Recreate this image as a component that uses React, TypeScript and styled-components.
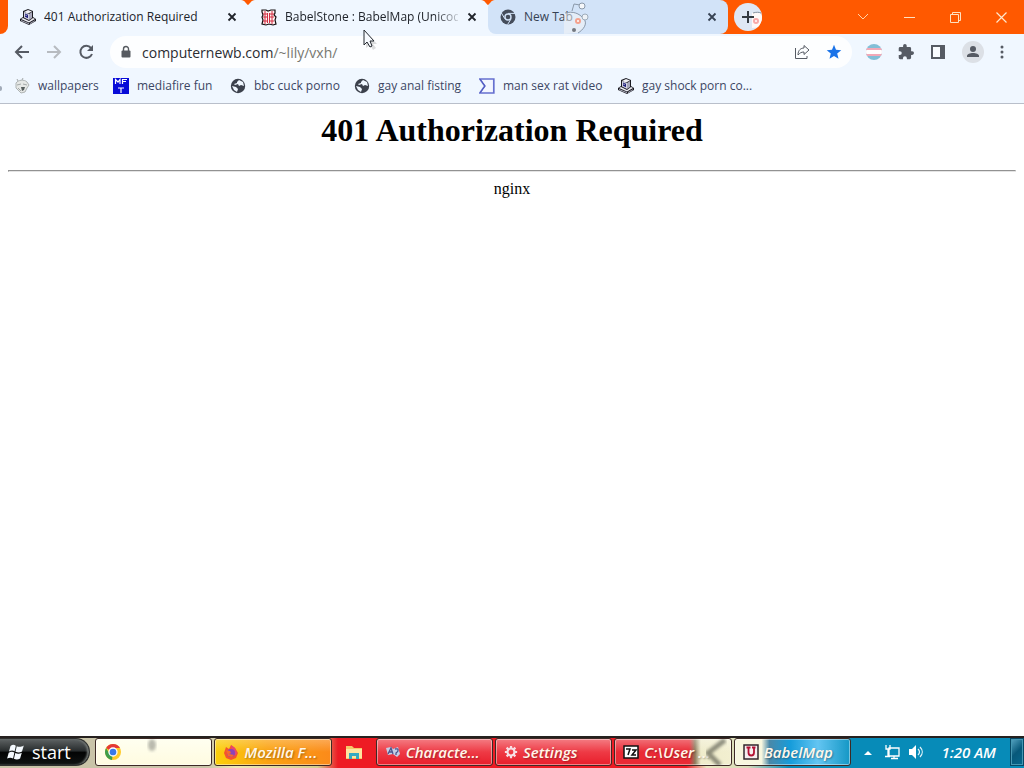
import React from "react";
import styled, { createGlobalStyle } from "styled-components";

const Global = createGlobalStyle`
  * { box-sizing: border-box; }
  body { margin: 0; background: #fff; }
  button, input { font: inherit; color: inherit; border: 0; margin: 0; padding: 0; background: none; }
  a { color: inherit; text-decoration: none; }
  svg { display: block; flex: none; }
`;

const uiFont = `"Comic Sans MS", "Open Sans", sans-serif`;

const Screen = styled.div`
  display: flex;
  flex-direction: column;
  min-height: 100vh;
`;

const Browser = styled.header`
  position: relative;
  font-family: ${uiFont};
  font-size: 12px;
  background: #f0f7ff;
  border-bottom: 1px solid #b9bfca;
`;

const TabStrip = styled.div`
  display: flex;
  height: 34px;
  padding-left: 8px;
  background: linear-gradient(90deg, #f0f7ff 0 600px, #ff5900 600px);
`;

const LeadCorner = styled.span`
  position: absolute;
  left: 0;
  top: 0;
  width: 8px;
  height: 34px;
  background: #ff5900;
  border-bottom-right-radius: 8px;
`;

const Tab = styled.div<{ $idle?: boolean }>`
  position: relative;
  display: flex;
  align-items: center;
  flex: 0 1 240px;
  min-width: 0;
  height: 34px;
  padding: 0 10px 0 12px;
  gap: 8px;
  color: ${(p) => (p.$idle ? "#364253" : "#20242b")};
  background: ${(p) => (p.$idle ? "#d2e3f8" : "#f0f7ff")};
  border-radius: ${(p) => (p.$idle ? "8px" : "8px 8px 0 0")};
`;

const TabNotch = styled.svg`
  position: absolute;
  right: -7px;
  top: 0;
  z-index: 1;
`;

const TabTitle = styled.a<{ $fade?: boolean }>`
  flex: 1;
  min-width: 0;
  overflow: hidden;
  white-space: nowrap;
  line-height: 20px;
  ${(p) => p.$fade && "mask-image: linear-gradient(90deg, #000 86%, #0003);"}
`;

const TabClose = styled.button`
  display: grid;
  place-items: center;
  width: 12px;
  height: 16px;
`;

const Mascot = styled.svg`
  position: absolute;
  left: 76px;
  top: 0;
`;

const TabActions = styled.div`
  display: flex;
  flex: 1;
  align-items: center;
  justify-content: space-between;
  padding-left: 6px;
  background: #ff5900;
`;

const NewTab = styled.button`
  width: 28px;
  height: 28px;
  border-radius: 50%;
  background: #dfe8f4;
  overflow: hidden;
`;

const WindowButtons = styled.div`
  display: flex;
  height: 28px;
`;

const WindowButton = styled.button`
  display: grid;
  place-items: center;
  width: 46px;
`;

const Toolbar = styled.div`
  display: flex;
  align-items: center;
  height: 36px;
  padding: 0 14px;
`;

const NavButtons = styled.div`
  display: flex;
  gap: 16px;
  margin-right: 16px;
`;

const IconButton = styled.button`
  display: grid;
  place-items: center;
  width: 16px;
  height: 24px;
  color: #565b64;
`;

const AddressBar = styled.div`
  display: flex;
  flex: 1;
  align-items: center;
  height: 32px;
  padding: 0 10px 0 8px;
  border-radius: 16px;
  background: #fdfeff;
`;

const Address = styled.div`
  display: flex;
  flex: 1;
  margin-left: 8px;
  padding-top: 2px;
  font-size: 14px;
  line-height: 24px;
  color: #2b2d31;
`;

const AddressPath = styled.span`
  color: #77776f;
`;

const AddressIcons = styled.div`
  display: flex;
  gap: 16px;
`;

const ToolIcons = styled.div`
  display: flex;
  align-items: center;
  gap: 16px;
  margin-left: 14px;
`;

const Bookmarks = styled.nav`
  display: flex;
  align-items: center;
  height: 33px;
  gap: 16px;
  padding: 0 0 2px 14px;
  color: #3c4663;
  white-space: nowrap;
  overflow: hidden;
`;

const Bookmark = styled.a<{ $label: number }>`
  display: grid;
  grid-template-columns: 16px ${(p) => p.$label}px;
  align-items: center;
  column-gap: 8px;
  line-height: 20px;
`;

const ClippedMark = styled.span`
  position: absolute;
  left: 0;
  top: 86px;
  width: 2px;
  height: 5px;
  border-radius: 0 2px 2px 0;
  background: #a1aab8;
`;

const Page = styled.main`
  flex: 1;
  padding: 8px;
  font-family: "Liberation Serif", serif;
  font-size: 16px;
  line-height: 18px;
  text-align: center;
  color: #000;
`;

const Title = styled.h1`
  margin: 0 0 21px;
  font-size: 32px;
  line-height: 37px;
`;

const Rule = styled.hr`
  margin: 0 0 8px;
  border: 1px solid;
  border-color: #929292 #e4e4e4 #e4e4e4 #929292;
`;

const Cursor = styled.svg`
  position: absolute;
  left: 363px;
  top: 29px;
  z-index: 3;
`;

const Taskbar = styled.footer`
  display: flex;
  height: 32px;
  padding-bottom: 2px;
  border-top: 2px solid #26211f;
  font-family: "Open Sans", sans-serif;
  background: linear-gradient(90deg, #c9c4a8 0 20%, #eee9b4 23%, #d5cf8d 31%, #ee1b24 33%, #ee1b24 67%, #e9e6c0 69%, #d8dbb8 73%, #078bb8 77%, #078bb8 100%);
`;

const Start = styled.button`
  display: flex;
  align-items: center;
  gap: 7px;
  width: 90px;
  padding-left: 7px;
  border: 1px solid #2f302f;
  border-left: 0;
  border-radius: 0 14px 14px 0;
  color: #fff;
  font-size: 18px;
  line-height: 24px;
  background: linear-gradient(#5e6364, #292d2e 45%, #030404 52%, #101313);
  box-shadow: inset -2px 0 2px #717673;
`;

const Tasks = styled.div`
  display: flex;
  flex: 0 1 756px;
  min-width: 0;
  gap: 2px;
  margin-left: 5px;
`;

const looks = {
  cream: "linear-gradient(#fffff0, #fffbe0)",
  gold: "linear-gradient(#ffffff44, transparent 50%), linear-gradient(90deg, #fbd00a, #fba312 45%, #fb8a1a)",
  red: "linear-gradient(#f47c83, #ee3a45 50%, #e91e2b)",
  torn: "linear-gradient(#ffffff55, transparent 50%), linear-gradient(90deg, #ea2a35 0 64%, #8d7b5d 69%, #efeccb 74%, #f2efd0)",
  blue: "linear-gradient(90deg, #f8f7df 0 23%, #4a88a8 30%, #169cda 48%, #63c5f2 72%, #1497c5)",
};

const Task = styled.button<{ $look: keyof typeof looks }>`
  position: relative;
  display: flex;
  align-items: center;
  flex: 1 1 118px;
  min-width: 0;
  gap: 5px;
  padding: 0 8px;
  border: 1px solid #3d2a25;
  border-radius: 3px;
  box-shadow: inset 0 0 0 1px #ffffff70;
  background: ${(p) => looks[p.$look]};
  color: #fff7ea;
  font-size: 15px;
  font-style: italic;
  font-weight: 600;
  line-height: 24px;
  text-shadow: 1px 1px 2px #0005;
  white-space: nowrap;
`;

const Explorer = styled.button`
  display: grid;
  place-items: center;
  flex: 0 0 40px;
`;

const Smudge = styled.svg<{ $left: number }>`
  position: absolute;
  left: ${(p) => p.$left}px;
  top: 0;
`;

const Tray = styled.div`
  display: flex;
  flex: 1;
  align-items: center;
  justify-content: flex-end;
  gap: 8px;
  color: #fff;
`;

const TrayButton = styled.button`
  display: grid;
  place-items: center;
  width: 16px;
  height: 24px;
`;

const Clock = styled.time`
  margin: 0 6px 0 10px;
  font-size: 15px;
  font-style: italic;
  font-weight: 600;
  line-height: 24px;
  white-space: nowrap;
`;

const ShowDesktop = styled.button`
  align-self: stretch;
  width: 14px;
  border: 1px solid #064966;
  box-shadow: inset 0 0 0 1px #4597b3;
  background: linear-gradient(135deg, #58a6c4, #07587a 50%, #07678d);
`;

const Computer = () => (
  <svg width="16" height="16" viewBox="0 0 16 16">
    <path d="M3 2L8 0l5 2v6l3 2v2l-7 4-9-4v-2l3-2z" fill="#1b1b22" />
    <path d="M4 3l4-2 4 1.500L8 4.500z" fill="#f1f1f6" />
    <path d="M4 3l5 2v6L4 8.500z" fill="#d3d3e2" />
    <path d="M9 5l3-2v6l-3 2z" fill="#a9a9bc" />
    <path d="M5 4.500l3 1.300v3.400L5 7.800z" fill="#23237e" />
    <path d="M5.500 5.500l1 .5v1l-1-.5z" fill="#fff" />
    <path d="M1 10l2-1 6 3 4-3 2 1-6 3.500z" fill="#ececf3" />
    <path d="M1 11l8 3.200v1L1 12zM10 14l5-2.800v.8l-5 3z" fill="#b3b3c2" />
  </svg>
);

const Babel = () => (
  <svg width="17" height="17" viewBox="0 0 17 17">
    <path d="M2 1h4l2 1 3-1h4v3l-1 2 2 2-1 3 1 4-3 1-4-1-3 1-4-1 1-4-1-3 1-2-1-3z" fill="#fff0f0" stroke="#171012" strokeWidth="1.200" />
    <path d="M5 2v13M12 2v13M3 5h4m3 0h4M3 8h4m3 0h4M3 12h4m3 0h4M7.500 4v10M9.500 4v10" stroke="#d32e43" />
  </svg>
);

const ChromeGray = () => (
  <svg width="16" height="16" viewBox="0 0 16 16">
    <circle cx="8" cy="8" r="7.5" fill="#454d5b" />
    <path d="M8 4.4h7M4.900 9.800L1.400 4M11.100 9.800L7.600 15.500" stroke="#d2e3f8" />
    <circle cx="8" cy="8" r="3" fill="#454d5b" stroke="#d2e3f8" strokeWidth="1.400" />
  </svg>
);

const ChromeColor = () => (
  <svg width="18" height="18" viewBox="0 0 18 18">
    <circle cx="9" cy="9" r="8" fill="#ffca28" />
    <path d="M9 9L2.100 5A8 8 0 0 1 16 5H9z" fill="#e53935" />
    <path d="M9 9l-1 8A8 8 0 0 1 2.100 5l3.400 6z" fill="#3f9d4c" />
    <circle cx="9" cy="9" r="4" fill="#3978e8" stroke="#fff" strokeWidth="1.300" />
  </svg>
);

const Cross = () => (
  <svg width="10" height="10" viewBox="0 0 10 10">
    <path d="M1.500 1.500l7 7m0-7l-7 7" stroke="currentColor" strokeWidth="1.800" />
  </svg>
);

const Globe = () => (
  <svg width="16" height="16" viewBox="0 0 16 16">
    <circle cx="8" cy="8" r="7.200" fill="#3c414c" />
    <path d="M9 2l4 2 1 4-3-1-2 1-1-2-3 1-1-1 3-1V4z" fill="#f0f7ff" />
    <path d="M2 8l4 1 2 2-1 3-3-2z" fill="#f0f7ff" />
  </svg>
);

const Face = () => (
  <svg width="16" height="16" viewBox="0 0 16 16">
    <path d="M2 5c2-3 8-4 11-1l2 3-2 3-2 4-4 1-5-5z" fill="#e6e8e6" stroke="#aeb3b3" />
    <path d="M4 3L3 1M8 2l1-2M3 7l4-1m2 0l4 1M4 10l3 3" stroke="#a3a8a8" />
    <path d="M7 9h4l-1 3-2 1z" fill="#565d5d" />
  </svg>
);

const MFT = () => (
  <svg width="16" height="16" viewBox="0 0 16 16">
    <path d="M0 0h16v16H0z" fill="#080bd8" />
    <path d="M2.500 6V1.500L5 4l2-2.500V6M9.500 6V1.500H14M9.500 3.500H13M5 10h6M8 10v5" fill="none" stroke="#fff" strokeWidth="1.200" />
  </svg>
);

const Sigma = () => (
  <svg width="16" height="16" viewBox="0 0 16 16">
    <path d="M.8 1h14v14H.8l5-7z" fill="#f3f6ff" stroke="#6670d0" strokeWidth="1.700" />
    <path d="M1 1l5 7-5 7" fill="none" stroke="#5059be" />
  </svg>
);

const Firefox = () => (
  <svg width="16" height="16" viewBox="0 0 16 16">
    <path d="M3 3l3 2 2-4 4 3 3 5-2 5-5 2-5-2-2-5z" fill="#f5532f" />
    <path d="M8 1l4 3 2 5-2 3-3-5z" fill="#e54774" />
    <circle cx="8" cy="9" r="4" fill="#8b43b9" />
    <path d="M3 6l4 1 1 2-2 1 5 1-2 2-4-1z" fill="#f56b2b" />
  </svg>
);

const bookmarks = [
  { label: "wallpapers", width: 59, icon: <Face /> },
  { label: "mediafire fun", width: 77, icon: <MFT /> },
  { label: "bbc cuck porno", width: 84, icon: <Globe /> },
  { label: "gay anal fisting", width: 85, icon: <Globe /> },
  { label: "man sex rat video", width: 99, icon: <Sigma /> },
  { label: "gay shock porn co...", width: 107, icon: <Computer /> },
];

const Notch = () => (
  <TabNotch width="14" height="7" viewBox="0 0 14 7" aria-hidden="true">
    <path d="M0 0h14C10 0 9 4 7 5 5 4 4 0 0 0z" fill="#ff5900" />
  </TabNotch>
);

export default function App() {
  return (
    <Screen>
      <Global />
      <Browser>
        <TabStrip>
          <LeadCorner />
          <Tab>
            <Computer />
            <TabTitle href="#">401 Authorization Required</TabTitle>
            <TabClose aria-label="Close tab"><Cross /></TabClose>
            <Notch />
          </Tab>
          <Tab>
            <Babel />
            <TabTitle href="#" $fade>BabelStone : BabelMap (Unicod</TabTitle>
            <TabClose aria-label="Close tab"><Cross /></TabClose>
            <Notch />
          </Tab>
          <Tab $idle>
            <ChromeGray />
            <TabTitle href="#">New Tab</TabTitle>
            <Mascot width="26" height="34" viewBox="0 0 26 34" aria-hidden="true">
              <path d="M0 13c8-2 14 0 19 5 5 6 0 12-6 15L0 34z" fill="#f8f7f5" fillOpacity=".5" />
              <path d="M8 11l2-7 6 1M1 13c8-2 14 0 19 6 4 5-1 11-6 14" fill="none" stroke="#8b99aa" />
              <circle cx="18" cy="6" r="3" fill="#f5f7fa" stroke="#8b99aa" />
              <circle cx="21" cy="17" r="3" fill="#edf2f7" stroke="#9eacba" />
              <circle cx="14" cy="21" r="3" fill="#f4a18d" /><circle cx="14" cy="21" r="1" fill="#fff" />
              <circle cx="10" cy="30" r="2" fill="#747981" />
            </Mascot>
            <TabClose aria-label="Close tab"><Cross /></TabClose>
          </Tab>
          <TabActions>
            <NewTab aria-label="New tab">
              <svg width="28" height="28" viewBox="0 0 28 28">
                <path d="M18 10c5-2 9 0 10 3v11l-10 1z" fill="#fff9f7" />
                <path d="M19 10c3-1 6-1 8 0" stroke="#83909d" fill="none" />
                <circle cx="22" cy="18" r="3" fill="#f8aaa9" /><circle cx="22" cy="18" r="1" fill="#fff" />
                <path d="M14 8v12M8 14h12" stroke="#343a40" strokeWidth="2" />
              </svg>
            </NewTab>
            <WindowButtons>
              <WindowButton aria-label="Search tabs"><svg width="12" height="8" viewBox="0 0 12 8"><path d="M1 1l5 5 5-5" fill="none" stroke="#ffd4a8" /></svg></WindowButton>
              <WindowButton aria-label="Minimize"><svg width="11" height="3"><path d="M0 1.500h11" stroke="#ffe1c0" /></svg></WindowButton>
              <WindowButton aria-label="Restore"><svg width="11" height="11" viewBox="0 0 11 11"><path d="M.5 2.500h8v8h-8zM2.500 2.500v-2h8v8h-2" fill="none" stroke="#ffe1c0" /></svg></WindowButton>
              <WindowButton aria-label="Close"><svg width="11" height="11" viewBox="0 0 11 11"><path d="M.5.5l10 10m0-10l-10 10" stroke="#ffe8cc" strokeWidth="1.200" /></svg></WindowButton>
            </WindowButtons>
          </TabActions>
        </TabStrip>
        <Toolbar>
          <NavButtons>
            <IconButton aria-label="Back"><svg width="16" height="16" viewBox="0 0 16 16"><path d="M15 8H2m6-6L2 8l6 6" fill="none" stroke="currentColor" strokeWidth="2" /></svg></IconButton>
            <IconButton aria-label="Forward" disabled><svg width="16" height="16" viewBox="0 0 16 16"><path d="M1 8h13M8 2l6 6-6 6" fill="none" stroke="#b7bbc0" strokeWidth="2" /></svg></IconButton>
            <IconButton aria-label="Reload"><svg width="16" height="16" viewBox="0 0 16 16"><path d="M13 4a6 6 0 1 0 1 6" fill="none" stroke="currentColor" strokeWidth="2" /><path d="M15 1v6H9z" fill="currentColor" /></svg></IconButton>
          </NavButtons>
          <AddressBar>
            <svg width="16" height="16" viewBox="0 0 16 16"><path d="M4.500 6.500h7a1 1 0 0 1 1 1v5a1 1 0 0 1-1 1h-7a1 1 0 0 1-1-1v-5a1 1 0 0 1 1-1" fill="#565a60" /><path d="M5.500 7V5a2.500 2.500 0 0 1 5 0v2" fill="none" stroke="#565a60" strokeWidth="1.400" /></svg>
            <Address role="textbox" aria-label="Address" tabIndex={0}>computernewb.com<AddressPath>/~lily/vxh/</AddressPath></Address>
            <AddressIcons>
              <IconButton aria-label="Share"><svg width="16" height="16" viewBox="0 0 16 16"><path d="M1.500 4v10.500H13V12M4 11c0-5 3-7 6-7V1.500L15 6l-5 4.500V8c-3 0-4 1-6 3z" fill="none" stroke="currentColor" /></svg></IconButton>
              <IconButton aria-label="Bookmarked"><svg width="16" height="16" viewBox="0 0 16 16"><path d="M8 .8l2 5 5.300.4-4.100 3.400 1.300 5.200L8 12l-4.500 2.800 1.300-5.200L.700 6.200 6 5.800z" fill="#1a73e8" /></svg></IconButton>
            </AddressIcons>
          </AddressBar>
          <ToolIcons>
            <IconButton aria-label="Flag extension"><svg width="16" height="16" viewBox="0 0 16 16"><clipPath id="flag"><circle cx="8" cy="8" r="8" /></clipPath><g clipPath="url(#flag)"><path d="M0 0h16v16H0z" fill="#82bfd7" /><path d="M0 4h16v8H0z" fill="#f2a9b8" /><path d="M0 6h16v4H0z" fill="#fff" /></g></svg></IconButton>
            <IconButton aria-label="Extensions"><svg width="16" height="16" viewBox="1 1 22 22"><path d="M20.500 11H19V7a2 2 0 0 0-2-2h-4V3.500a2.500 2.500 0 0 0-5 0V5H4a2 2 0 0 0-2 2v3.800h1.500a2.700 2.700 0 0 1 0 5.400H2V20a2 2 0 0 0 2 2h3.800v-1.500a2.700 2.700 0 0 1 5.400 0V22H17a2 2 0 0 0 2-2v-4h1.500a2.500 2.500 0 0 0 0-5z" fill="currentColor" /></svg></IconButton>
            <IconButton aria-label="Side panel"><svg width="16" height="16" viewBox="0 0 16 16"><path d="M2 2h12v12H2z" fill="#f9fcff" stroke="currentColor" strokeWidth="2" /><path d="M10 2h5v12h-5z" fill="currentColor" /></svg></IconButton>
            <IconButton aria-label="Profile"><svg width="22" height="22" viewBox="0 0 22 22"><circle cx="11" cy="11" r="11" fill="#dce0e6" /><circle cx="11" cy="8" r="3" fill="currentColor" /><path d="M5 16v-1c0-4 12-4 12 0v1z" fill="currentColor" /></svg></IconButton>
            <IconButton aria-label="Menu"><svg width="4" height="14" viewBox="0 0 4 14"><circle cx="2" cy="2" r="1.500" fill="currentColor" /><circle cx="2" cy="7" r="1.500" fill="currentColor" /><circle cx="2" cy="12" r="1.500" fill="currentColor" /></svg></IconButton>
          </ToolIcons>
        </Toolbar>
        <Bookmarks aria-label="Bookmarks">
          <ClippedMark />
          {bookmarks.map((b) => (
            <Bookmark key={b.label} href="#" $label={b.width}>{b.icon}<span>{b.label}</span></Bookmark>
          ))}
        </Bookmarks>
        <Cursor width="15" height="22" viewBox="0 0 15 22" aria-hidden="true">
          <path d="M3 3v16l4-3 3 5 3-2-3-4h4z" fill="#0002" />
          <path d="M1 1v15l3-3 3 5 2-1-2-5h4z" fill="#f8fbff" stroke="#252a31" />
        </Cursor>
      </Browser>
      <Page>
        <Title>401 Authorization Required</Title>
        <Rule />
        nginx
      </Page>
      <Taskbar>
        <Start>
          <svg width="18" height="18" viewBox="0 0 18 18"><path d="M3.500 3c2-1.500 3.500-1.500 5.300-.3L7.600 8.300C6 7.300 4 7.300 2 8.500zM9.800 3.200c2 1 4 1 7-.8l-1.800 6c-2 1.300-4.300 1.300-6.500.3zM1.700 9.800c2-1.200 4-1.200 5.700-.2l-1.300 5.800c-2-1-4-1-6 .2zM8.300 10c2.300 1.100 4.300.9 6.500-.3l-1.700 5.800c-2 1.300-4 1.300-6.200.3z" fill="#f5faff" /></svg>
          start
        </Start>
        <Tasks>
          <Task $look="cream" aria-label="Chrome">
            <ChromeColor />
            <Smudge $left={48} width="16" height="18" viewBox="0 0 16 18"><defs><filter id="soft"><feGaussianBlur stdDeviation="1.500" /></filter></defs><ellipse cx="8" cy="6" rx="4" ry="6" fill="#8b8c83" opacity=".6" filter="url(#soft)" /></Smudge>
          </Task>
          <Task $look="gold"><Firefox />Mozilla F...</Task>
          <Explorer aria-label="Explorer"><svg width="18" height="16" viewBox="0 0 18 16"><path d="M1 2h6l2 2h8v11H1z" fill="#f5c969" /><path d="M1 5h16v9H1z" fill="#ffe5a0" /><path d="M4 9h10v6h-3v-3H7v3H4z" fill="#34aac2" /></svg></Explorer>
          <Task $look="red">
            <svg width="16" height="16" viewBox="0 0 16 16"><path d="M1 4l5-1 2 2 5-2 2 7-3 3-4-3-5 1z" fill="#c6cfe6" /><path d="M3 10l3-6 2 6M4 8h3M10 5c4-1 4 2 1 4v2" fill="none" stroke="#4b568e" strokeWidth="1.300" /></svg>
            Characte...
          </Task>
          <Task $look="red">
            <svg width="14" height="14" viewBox="0 0 16 16"><circle cx="8" cy="8" r="4" fill="none" stroke="#f8dfe5" strokeWidth="2.500" /><path d="M8 1v3m0 8v3M1 8h3m8 0h3M3 3l2 2m6 6l2 2m0-10l-2 2m-6 6l-2 2" stroke="#f8dfe5" strokeWidth="2.500" /></svg>
            Settings
          </Task>
          <Task $look="torn">
            <svg width="16" height="14" viewBox="0 0 16 14"><path d="M1 1h14v12H1z" fill="#fff" stroke="#111" strokeWidth="1.500" /><path d="M3 4h4l-2 6M9 5h4l-4 5h4" fill="none" stroke="#111" strokeWidth="1.500" /></svg>
            C:\User ...
            <Smudge $left={86} width="26" height="27" viewBox="0 0 26 27"><path d="M24 1L7 14l12 12" fill="none" stroke="#4b4d42" strokeWidth="5" opacity=".6" filter="url(#soft)" /></Smudge>
          </Task>
          <Task $look="blue">
            <svg width="16" height="16" viewBox="0 0 16 16"><path d="M1 1h14v14H1z" fill="#f6eef0" stroke="#33272d" strokeWidth="1.500" /><path d="M3.500 3.500h4M9 3.500h3.500M5.500 3v5.500c0 4 5.500 4 5.500 0V3" fill="none" stroke="#b31133" strokeWidth="1.800" /></svg>
            BabelMap
          </Task>
        </Tasks>
        <Tray>
          <TrayButton aria-label="Show hidden icons"><svg width="8" height="5" viewBox="0 0 8 5"><path d="M0 5l4-4 4 4z" fill="#fff" /></svg></TrayButton>
          <TrayButton aria-label="Network"><svg width="16" height="16" viewBox="0 0 16 16"><path d="M5 4h10v8H5zM10 12v3M7 14.500h7M2 1v4h4V1M4 5v7M1 12.500h5" fill="none" stroke="#fff" strokeWidth="1.300" /></svg></TrayButton>
          <TrayButton aria-label="Volume"><svg width="16" height="14" viewBox="0 0 16 14"><path d="M1 4h3l4-4v14l-4-4H1z" fill="#fff" /><path d="M10 4c2 2 2 4 0 6M12 2c3 3 3 7 0 10" fill="none" stroke="#e7f5fa" strokeWidth="1.200" /></svg></TrayButton>
          <Clock>1:20 AM</Clock>
          <ShowDesktop aria-label="Show desktop" />
        </Tray>
      </Taskbar>
    </Screen>
  );
}
